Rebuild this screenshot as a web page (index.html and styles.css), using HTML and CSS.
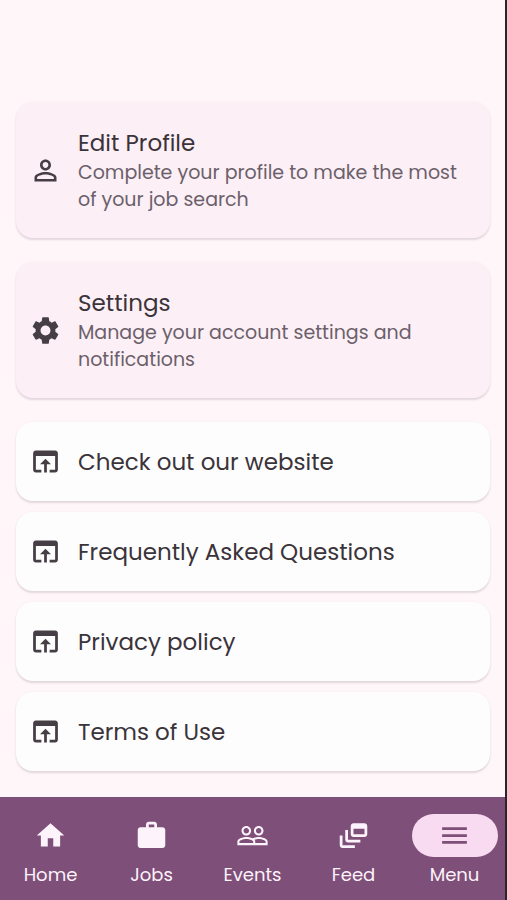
FILE: index.html
```html
<!DOCTYPE html>
<html lang="en">
<head>
<meta charset="utf-8">
<meta name="viewport" content="width=device-width, initial-scale=1">
<title>Menu</title>
<link rel="stylesheet" href="styles.css">
</head>
<body>
<svg class="sprite" aria-hidden="true">
  <symbol id="open" viewBox="0 0 24 24"><path d="M19 4H5c-1.110 0-2 .9-2 2v12c0 1.100.89 2 2 2h4v-2H5V8h14v10h-4v2h4c1.100 0 2-.9 2-2V6c0-1.100-.89-2-2-2zm-7 6l-4 4h3v6h2v-6h3l-4-4z"/></symbol>
</svg>
<main class="content">
  <a class="card card-tinted" href="#profile">
    <svg class="icon" viewBox="0 0 24 24" aria-hidden="true"><path d="M12 5.900c1.160 0 2.100.94 2.100 2.100s-.94 2.100-2.100 2.100S9.900 9.160 9.900 8s.94-2.100 2.100-2.100m0 9c2.970 0 6.100 1.460 6.100 2.100v1.100H5.900V17c0-.64 3.130-2.100 6.100-2.100M12 4C9.790 4 8 5.790 8 8s1.790 4 4 4 4-1.790 4-4-1.790-4-4-4zm0 9c-2.670 0-8 1.340-8 4v3h16v-3c0-2.660-5.330-4-8-4z"/></svg>
    <span class="text"><span class="title">Edit Profile</span><span class="subtitle">Complete your profile to make the most of your job search</span></span>
  </a>
  <a class="card card-tinted" href="#settings">
    <svg class="icon" viewBox="0 0 24 24" aria-hidden="true"><path d="M19.140 12.940c.04-.3.060-.61.060-.94 0-.32-.02-.64-.07-.94l2.030-1.580c.18-.14.23-.41.120-.61l-1.920-3.320c-.12-.22-.37-.29-.59-.22l-2.390.96c-.5-.38-1.030-.7-1.620-.94l-.36-2.540c-.04-.24-.24-.41-.48-.41h-3.840c-.24 0-.43.17-.47.41l-.36 2.540c-.59.24-1.130.57-1.620.94l-2.390-.96c-.22-.08-.47 0-.59.22L2.740 8.870c-.12.21-.08.47.120.61l2.030 1.580c-.05.3-.09.63-.09.94s.02.64.070.94l-2.030 1.580c-.18.14-.23.41-.12.61l1.920 3.320c.12.22.37.29.59.22l2.390-.96c.5.38 1.030.7 1.620.94l.36 2.540c.05.24.24.41.48.41h3.840c.24 0 .44-.17.47-.41l.36-2.540c.59-.24 1.130-.56 1.620-.94l2.390.96c.22.08.47 0 .59-.22l1.920-3.320c.12-.22.070-.47-.12-.61l-2.010-1.580zM12 15.600c-1.980 0-3.600-1.620-3.600-3.600s1.620-3.600 3.600-3.600 3.600 1.620 3.600 3.600-1.620 3.600-3.600 3.600z"/></svg>
    <span class="text"><span class="title">Settings</span><span class="subtitle">Manage your account settings and notifications</span></span>
  </a>
  <div class="links">
    <a class="card" href="#website"><svg class="icon" aria-hidden="true"><use href="#open"/></svg><span class="title">Check out our website</span></a>
    <a class="card" href="#faq"><svg class="icon" aria-hidden="true"><use href="#open"/></svg><span class="title">Frequently Asked Questions</span></a>
    <a class="card" href="#privacy"><svg class="icon" aria-hidden="true"><use href="#open"/></svg><span class="title">Privacy policy</span></a>
    <a class="card" href="#terms"><svg class="icon" aria-hidden="true"><use href="#open"/></svg><span class="title">Terms of Use</span></a>
  </div>
</main>
<nav class="nav" aria-label="Main">
  <a class="nav-item" href="#home"><span class="pill"><svg class="icon" viewBox="0 0 24 24" aria-hidden="true"><path d="M10 20v-6h4v6h5v-8h3L12 3 2 12h3v8z"/></svg></span>Home</a>
  <a class="nav-item" href="#jobs"><span class="pill"><svg class="icon" viewBox="0 0 24 24" aria-hidden="true"><path fill-rule="evenodd" d="M20 6h-4V4c0-1.100-.9-2-2-2h-4c-1.100 0-2 .9-2 2v2H4c-1.100 0-2 .9-2 2v11c0 1.100.9 2 2 2h16c1.100 0 2-.9 2-2V8c0-1.100-.9-2-2-2zm-6 0h-4V4h4v2z"/></svg></span>Jobs</a>
  <a class="nav-item" href="#events"><span class="pill"><svg class="icon" viewBox="0 0 24 24" aria-hidden="true"><path d="M16.500 13c-1.200 0-3.070.34-4.500 1-1.430-.67-3.300-1-4.500-1C5.330 13 1 14.080 1 16.250V19h22v-2.750c0-2.170-4.330-3.250-6.500-3.250zm-4 4.500h-10v-1.250c0-.54 2.560-1.750 5-1.750s5 1.210 5 1.750v1.250zm9 0H14v-1.250c0-.46-.2-.86-.52-1.220.88-.3 1.960-.53 3.020-.53 2.440 0 5 1.210 5 1.750v1.250zM7.500 12c1.930 0 3.500-1.570 3.500-3.500S9.430 5 7.500 5 4 6.570 4 8.500 5.570 12 7.500 12zm0-5.500c1.100 0 2 .9 2 2s-.9 2-2 2-2-.9-2-2 .9-2 2-2zm9 5.500c1.930 0 3.500-1.570 3.500-3.500S18.430 5 16.500 5 13 6.570 13 8.500s1.570 3.500 3.500 3.500zm0-5.500c1.100 0 2 .9 2 2s-.9 2-2 2-2-.9-2-2 .9-2 2-2z"/></svg></span>Events</a>
  <a class="nav-item" href="#feed"><span class="pill"><svg class="icon" viewBox="0 0 24 24" aria-hidden="true"><path fill-rule="evenodd" d="M8 8H6v7c0 1.100.9 2 2 2h9v-2H8zM20 3h-8c-1.100 0-2 .9-2 2v6c0 1.100.9 2 2 2h8c1.100 0 2-.9 2-2V5c0-1.100-.9-2-2-2zm0 8h-8V7h8zM4 12H2v7c0 1.100.9 2 2 2h9v-2H4z"/></svg></span>Feed</a>
  <a class="nav-item nav-item-active" href="#menu" aria-current="page"><span class="pill"><svg class="icon" viewBox="0 0 24 24" aria-hidden="true"><path d="M3 18h18v-2H3v2zm0-5h18v-2H3v2zm0-7v2h18V6H3z"/></svg></span>Menu</a>
</nav>
</body>
</html>
```
FILE: styles.css
```css
* {
  box-sizing: border-box;
}

body {
  margin: 0;
  min-height: 100vh;
  display: flex;
  flex-direction: column;
  border-right: 2px solid #29262b;
  background: #fef6f8;
  color: #3a343a;
  font-family: Poppins, Inter, sans-serif;
}

a {
  color: inherit;
  text-decoration: none;
}

.sprite {
  display: none;
}

.icon {
  width: 33px;
  height: 33px;
  flex: none;
  fill: currentColor;
}

.content {
  flex: 1;
  display: flex;
  flex-direction: column;
  gap: 24px;
  padding: 102px 15px 24px 16px;
}

.links {
  display: flex;
  flex-direction: column;
  gap: 11px;
}

.card {
  display: flex;
  align-items: center;
  gap: 16px;
  min-height: 79px;
  padding: 16px 13px;
  border-radius: 17px;
  background: #fefdfe;
  box-shadow: 0 2px 2px #e2d7dd, 0 0 2px #f4eaf0;
}

.card .icon {
  color: #463e45;
}

.card-tinted {
  min-height: 136px;
  background: #fceff6;
}

.text {
  display: flex;
  flex-direction: column;
}

.title {
  font-size: 23px;
  line-height: 32px;
}

.subtitle {
  color: #6b606a;
  font-size: 19px;
  line-height: 27px;
}

.nav {
  display: flex;
  min-height: 103px;
  padding-top: 17px;
  background: #7e4f78;
  color: #fdf3fb;
}

.nav-item {
  flex: 1;
  display: flex;
  flex-direction: column;
  align-items: center;
  gap: 5px;
  font-size: 18px;
  line-height: 26px;
}

.pill {
  display: flex;
  align-items: center;
  justify-content: center;
  width: 86px;
  height: 43px;
  border-radius: 22px;
}

.nav-item-active .pill {
  background: #f8dbf1;
  color: #7e4f78;
}
```
